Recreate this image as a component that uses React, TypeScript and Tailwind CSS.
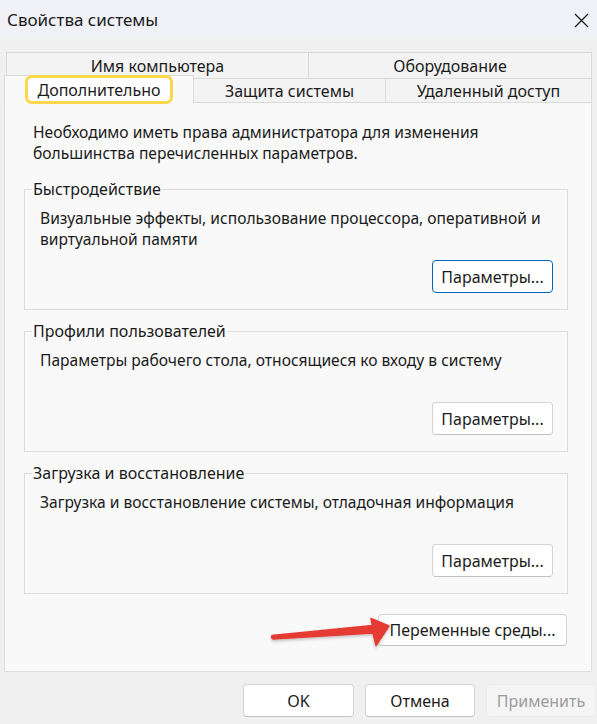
import React from 'react';

const font = { fontFamily: '"Noto Sans", "Open Sans", sans-serif' };

function Button({ label, focused, disabled, className }: { label: string; focused?: boolean; disabled?: boolean; className?: string }) {
  const base = 'flex items-center justify-center rounded-[4px] text-[16px] leading-none';
  const look = disabled
    ? 'bg-[#f5f5f5] border border-[#ececec] text-[#9d9d9d]'
    : focused
      ? 'bg-white border border-[#0067c0] text-[#1b1b1b]'
      : 'bg-white border border-[#d4d4d4] border-b-[#c2c2c2] text-[#1b1b1b]';
  return <div className={`${base} ${look} ${className ?? ''}`}>{label}</div>;
}

function Group({ title, text, focused }: { title: string; text: React.ReactNode; focused?: boolean }) {
  return (
    <div className="relative h-[121px] border border-[#dcdcdc] flex flex-col pt-[18px] pl-[15px] pr-[14px] pb-[16px]">
      <span className="absolute left-[7px] top-[-11px] px-[1px] bg-[#f9f9f9] leading-[21px]">{title}</span>
      <p className="leading-[21px] text-[15.6px] whitespace-nowrap">{text}</p>
      <div className="mt-auto flex justify-end">
        <Button label="Параметры..." focused={focused} className="w-[121px] h-[33px]" />
      </div>
    </div>
  );
}

export default function App() {
  return (
    <div style={font} className="relative w-[597px] h-[724px] bg-[#f0f0f0] text-[#1b1b1b] text-[16px] overflow-hidden flex flex-col">
      {/* title bar */}
      <div className="h-[39px] bg-[#eff1f6] flex items-center justify-between pl-[7px] pr-[8px]">
        <span className="text-[17px]">Свойства системы</span>
        <svg width="15" height="15" viewBox="0 0 15 15" className="mt-[1px]">
          <path d="M1 1 L14 14 M14 1 L1 14" stroke="#1b1b1b" strokeWidth="1.3" />
        </svg>
      </div>

      {/* tabs */}
      <div className="mt-[13px] ml-[6px] w-[586px] h-[26px] flex">
        <div className="w-[303px] flex items-center justify-center border border-b-0 border-[#dadada] bg-[#f3f3f3]">Имя компьютера</div>
        <div className="flex-1 flex items-center justify-center border border-l-0 border-b-0 border-[#dadada] bg-[#f3f3f3]">Оборудование</div>
      </div>
      <div className="relative z-10 -mt-[3px] -mb-[1px] ml-[4px] w-[588px] flex items-end">
        <div className="w-[190px] h-[28px] flex justify-center bg-[#f9f9f9] border border-b-0 border-[#dadada]">
          <span className="h-[29px] -mt-[1px] px-[9px] flex items-center rounded-[7px] border-[3px] border-[#fdd64b] bg-white">Дополнительно</span>
        </div>
        <div className="w-[192px] h-[25px] flex items-center justify-center border border-l-0 border-[#dadada] bg-[#f3f3f3]">Защита системы</div>
        <div className="flex-1 h-[25px] flex items-center justify-center border border-l-0 border-[#dadada] bg-[#f3f3f3]">Удаленный доступ</div>
      </div>

      {/* panel */}
      <div className="ml-[4px] w-[588px] h-[570px] bg-[#f9f9f9] border border-[#dfdfdf] pt-[19px] pl-[19px] pr-[23px] flex flex-col">
        <p className="ml-[9px] leading-[21px] text-[15.6px] whitespace-nowrap">
          Необходимо иметь права администратора для изменения<br />большинства перечисленных параметров.
        </p>
        <div className="mt-[25px] flex flex-col gap-[21px]">
          <Group
            title="Быстродействие"
            focused
            text={<>Визуальные эффекты, использование процессора, оперативной и<br />виртуальной памяти</>}
          />
          <Group title="Профили пользователей" text="Параметры рабочего стола, относящиеся ко входу в систему" />
          <Group title="Загрузка и восстановление" text="Загрузка и восстановление системы, отладочная информация" />
        </div>
        <div className="mt-[20px] flex justify-end mr-[1px]">
          <Button label="Переменные среды..." className="w-[189px] h-[32px]" />
        </div>
      </div>

      {/* dialog buttons */}
      <div className="mt-[12px] flex justify-end gap-[11px] pr-[1px]">
        <Button label="OK" className="w-[111px] h-[33px]" />
        <Button label="Отмена" className="w-[110px] h-[33px]" />
        <Button label="Применить" disabled className="w-[110px] h-[33px]" />
      </div>

      {/* red annotation arrow */}
      <svg className="absolute left-0 top-0 pointer-events-none" width="597" height="724" viewBox="0 0 597 724">
        <defs>
          <filter id="sh" x="-10%" y="-50%" width="120%" height="200%">
            <feDropShadow dx="0" dy="1.5" stdDeviation="1.5" floodColor="#000" floodOpacity="0.25" />
          </filter>
        </defs>
        <path
          d="M272 635.5 Q271 637.5 273 639 L373 633 L376 645.5 L389 626 L371 618.5 L372.5 625.5 Z"
          fill="#e53b33"
          stroke="#e53b33"
          strokeWidth="1.5"
          strokeLinejoin="round"
          filter="url(#sh)"
        />
      </svg>
    </div>
  );
}
